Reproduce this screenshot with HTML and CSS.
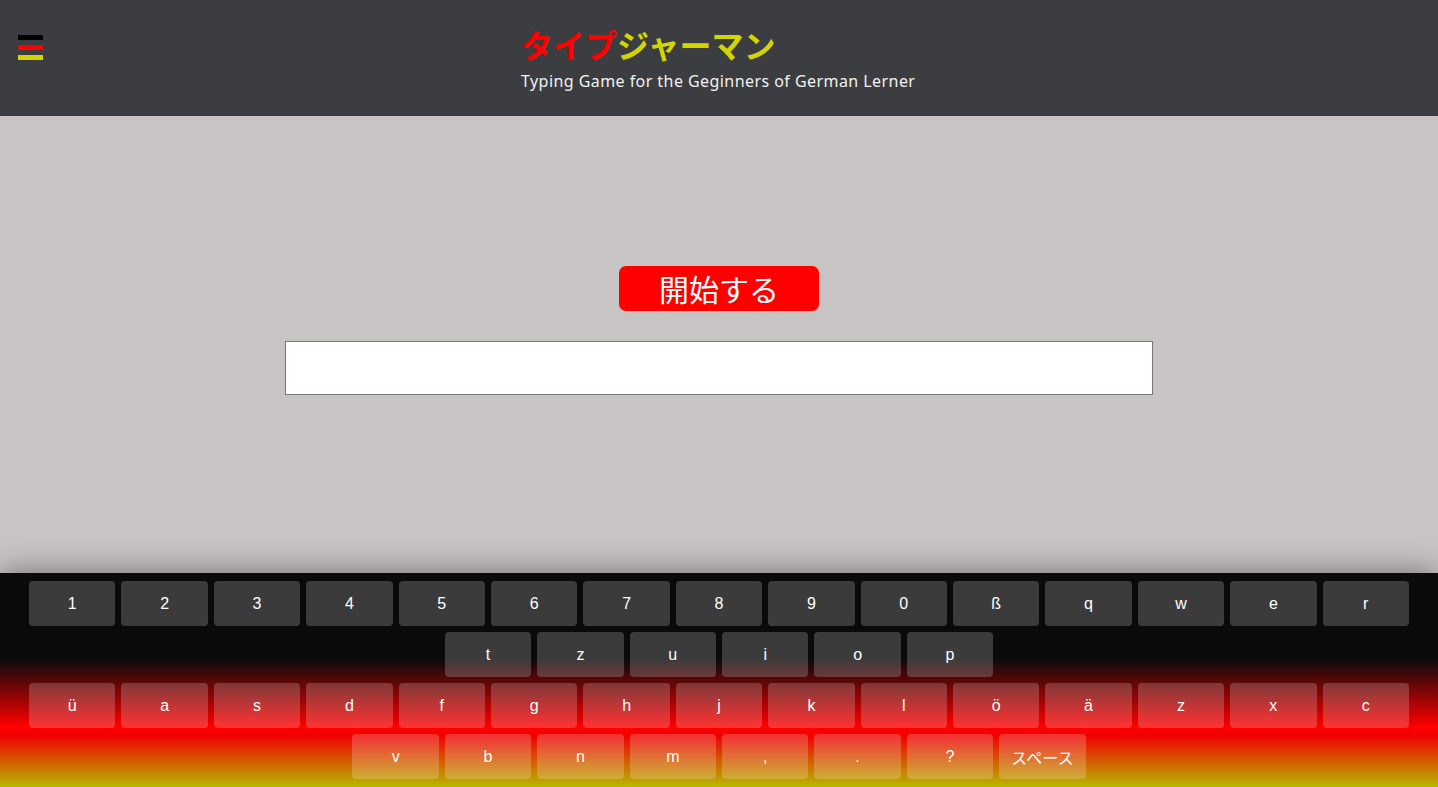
FILE: index.html
```html
<!DOCTYPE html>
<html lang="ja">
<head>
<meta charset="utf-8">
<title>タイプジャーマン</title>
<link rel="stylesheet" href="styles.css">
</head>
<body>
<div class="page">
  <header class="header">
    <div class="menu" aria-label="menu">
      <span class="bar bar-black"></span>
      <span class="bar bar-red"></span>
      <span class="bar bar-yellow"></span>
    </div>
    <div class="brand">
      <h1 class="title"><span class="t-red">タイプ</span><span class="t-yellow">ジャーマン</span></h1>
      <p class="subtitle">Typing Game for the Geginners of German Lerner</p>
    </div>
    <div></div>
  </header>
  <main class="main">
    <button class="start">開始する</button>
    <input class="answer" type="text">
  </main>
  <section class="keyboard">
    <div class="row">
      <div class="key">1</div><div class="key">2</div><div class="key">3</div><div class="key">4</div><div class="key">5</div><div class="key">6</div><div class="key">7</div><div class="key">8</div><div class="key">9</div><div class="key">0</div><div class="key">ß</div><div class="key">q</div><div class="key">w</div><div class="key">e</div><div class="key">r</div>
    </div>
    <div class="row">
      <div class="key">t</div><div class="key">z</div><div class="key">u</div><div class="key">i</div><div class="key">o</div><div class="key">p</div>
    </div>
    <div class="row">
      <div class="key">ü</div><div class="key">a</div><div class="key">s</div><div class="key">d</div><div class="key">f</div><div class="key">g</div><div class="key">h</div><div class="key">j</div><div class="key">k</div><div class="key">l</div><div class="key">ö</div><div class="key">ä</div><div class="key">z</div><div class="key">x</div><div class="key">c</div>
    </div>
    <div class="row">
      <div class="key">v</div><div class="key">b</div><div class="key">n</div><div class="key">m</div><div class="key">,</div><div class="key">.</div><div class="key">?</div><div class="key key-jp">スペース</div>
    </div>
  </section>
</div>
</body>
</html>
```

FILE: styles.css
```css
* { box-sizing: border-box; }
html, body { margin: 0; padding: 0; }
body {
  font-family: "Noto Sans CJK JP", "Noto Sans", sans-serif;
  background: #c8c4c3;
  overflow: hidden;
}
.page {
  height: 787px;
  display: flex;
  flex-direction: column;
}
.header {
  height: 116px;
  flex: 0 0 116px;
  background: #3c3d40;
  display: grid;
  grid-template-columns: 1fr auto 1fr;
}
.menu {
  padding: 35px 0 0 18px;
  display: flex;
  flex-direction: column;
  gap: 5px;
}
.bar {
  display: block;
  width: 25px;
  height: 5px;
}
.bar-black { background: #000; }
.bar-red { background: #ff0000; }
.bar-yellow { background: #d4d400; }
.brand {
  width: 396px;
  padding-top: 22px;
}
.title {
  margin: 0;
  font-size: 32px;
  line-height: 44px;
  font-weight: 700;
  letter-spacing: 0;
}
.t-red { color: #ff0000; }
.t-yellow { color: #d4d400; }
.subtitle {
  margin: 4px 0 0;
  color: #f2f2f2;
  font-family: "Noto Sans", "Noto Sans CJK JP", sans-serif;
  font-size: 16px;
  line-height: 22px;
  letter-spacing: 0.44px;
  white-space: nowrap;
}
.main {
  flex: 1;
  display: flex;
  flex-direction: column;
  align-items: center;
  padding-top: 150px;
}
.start {
  width: 200px;
  height: 45px;
  border: none;
  border-radius: 7px;
  background: #ff0000;
  color: #fff;
  font-family: "Noto Sans CJK JP", sans-serif;
  font-size: 30px;
  line-height: 45px;
  padding: 0;
}
.answer {
  margin-top: 30px;
  width: 868px;
  height: 54px;
  border: 1px solid #767676;
  background: #fff;
  font-size: 20px;
}
.keyboard {
  flex: 0 0 214px;
  height: 214px;
  padding: 8px 0;
  display: flex;
  flex-direction: column;
  gap: 6px;
  background: linear-gradient(180deg, #0a0a0a 0%, #0a0a0a 40%, #ff0000 72%, #f00000 76%, #b8b800 100%);
  box-shadow: 0 0 30px rgba(0, 0, 0, 0.45);
  position: relative;
}
.row {
  display: flex;
  justify-content: center;
  gap: 6px;
}
.key {
  width: 86.4px;
  height: 45px;
  border-radius: 4px;
  background: rgba(255, 255, 255, 0.2);
  color: #fff;
  font-family: "Liberation Sans", Arial, sans-serif;
  font-size: 16px;
  display: flex;
  align-items: center;
  justify-content: center;
}
.key-jp {
  font-family: "Noto Sans CJK JP", sans-serif;
  font-size: 16px;
}
```
